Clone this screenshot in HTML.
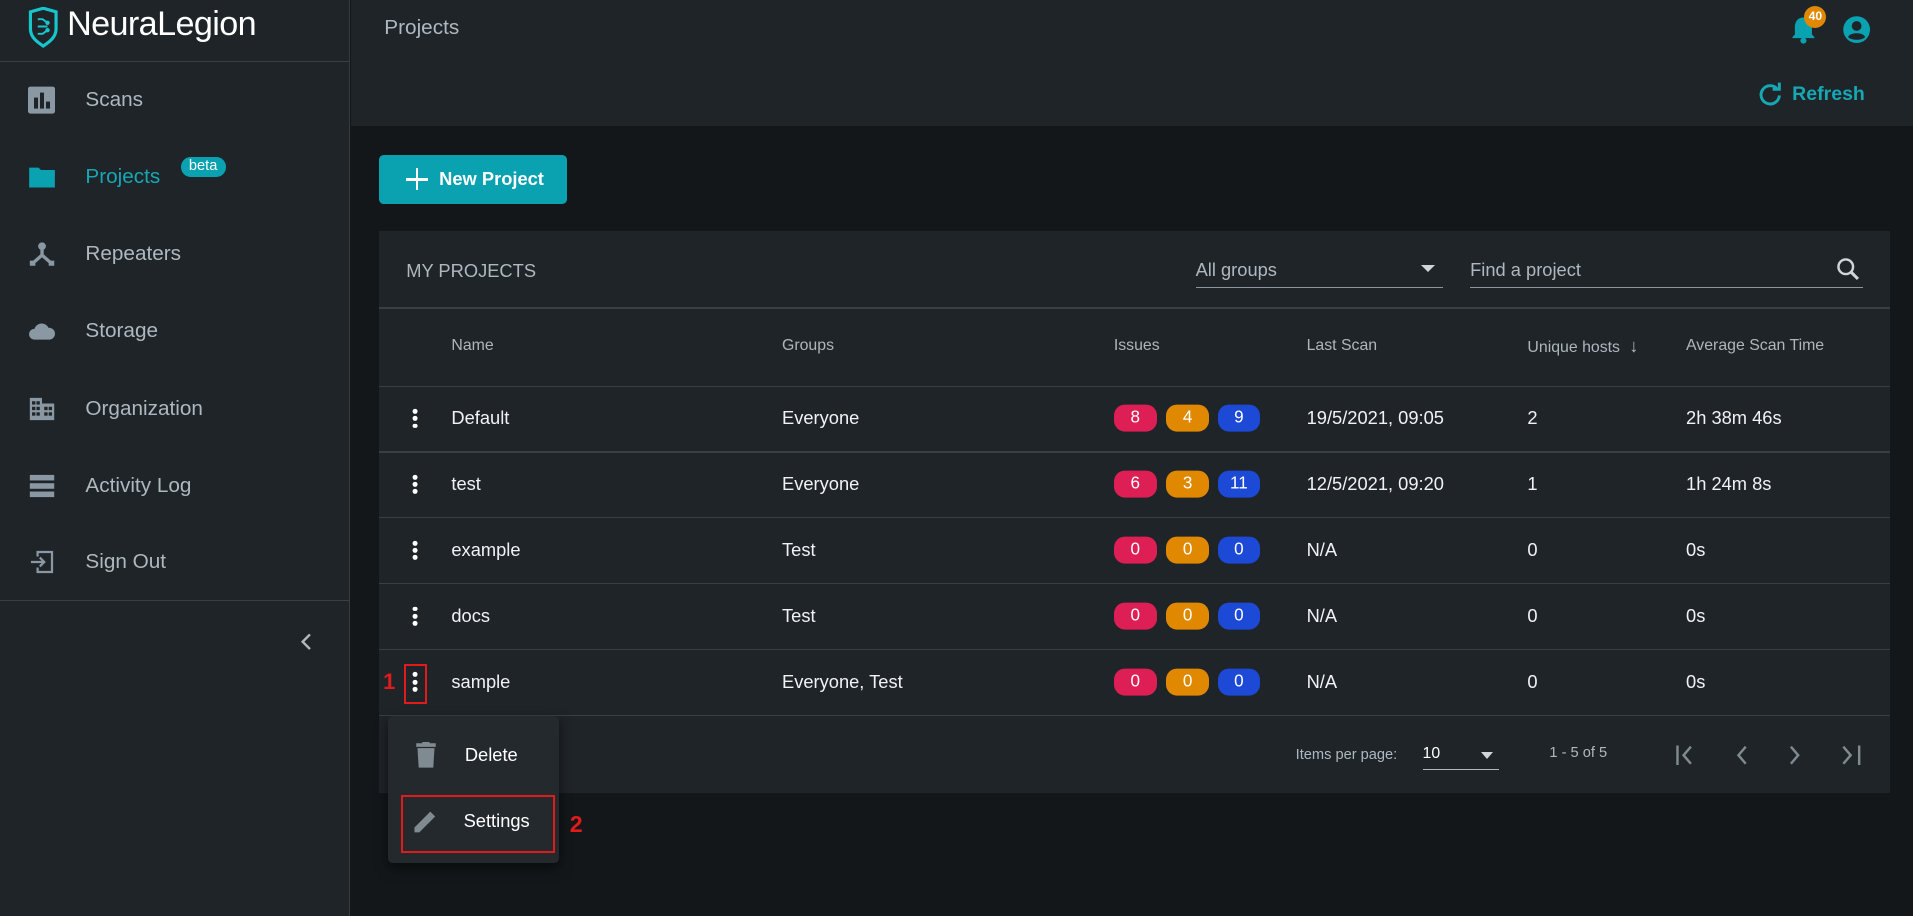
<!DOCTYPE html>
<html><head><meta charset="utf-8"><style>
*{box-sizing:border-box;margin:0;padding:0}
html,body{width:1913px;height:916px;overflow:hidden;background:#131719}
#w{zoom:1.22;width:1568px;height:751px;position:relative;font-family:"Liberation Sans",sans-serif;color:#e8ecee;background:#131719}
.a{position:absolute;white-space:nowrap}
.side{left:0;top:0;width:287px;height:751px;background:#1f2428;border-right:1px solid #363b40}
.hdr{left:288px;top:0;width:1280px;height:103px;background:#1f2428}
.mi{position:absolute;left:70px;font-size:17px;color:#aeb8bf;transform:translateY(-50%)}
.ic{position:absolute;left:23px;width:23px;height:20px;transform:translateY(-50%)}
.card{left:311px;top:189px;width:1238px;height:461px;background:#1f2428}
.th{font-size:13px;color:#aeb6bc;transform:translateY(-50%)}
.td{font-size:15px;color:#f0f3f4;transform:translateY(-50%)}
.ln{left:0;width:1238px;height:1px;background:#3a3f44}
.pill{position:absolute;width:35px;height:22px;border-radius:9px;font-size:14px;color:#fff;text-align:center;line-height:22px;transform:translateY(-50%)}
.r{background:#de1f55}.o{background:#df8800}.b{background:#1c49d6}
.dots{position:absolute;width:4px;transform:translate(-50%,-50%)}
.dots i{display:block;width:4px;height:4px;border-radius:50%;background:#fff;margin:2px 0}
</style></head><body><div id="w">
<div class="a side">
 <svg class="a" style="left:23px;top:6px" width="25" height="33" viewBox="0 0 25 33"><path d="M2 4 L12.5 1 L23 4 V18 C23 25 17 29 12.5 32 C8 29 2 25 2 18 Z" fill="none" stroke="#16c6cc" stroke-width="2.6"/><path d="M8 10 H12 L16 13 M8 16 H16 M8 22 H12 L16 19" fill="none" stroke="#16c6cc" stroke-width="1.6"/><circle cx="16" cy="13" r="1.8" fill="#16c6cc"/><circle cx="16" cy="19" r="1.8" fill="#16c6cc"/></svg>
 <div class="a" style="left:55px;top:4px;font-size:28px;color:#fff;letter-spacing:-0.5px">NeuraLegion</div>
 <div class="a" style="left:0;top:50px;width:287px;height:1px;background:#3a3f44"></div>
 <div class="ic" style="top:82px;background:#8a98a3;border-radius:2px;width:22px;height:22px"><div class="a" style="left:5px;top:9px;width:3px;height:9px;background:#1f2428"></div><div class="a" style="left:10px;top:5px;width:3px;height:13px;background:#1f2428"></div><div class="a" style="left:15px;top:12px;width:3px;height:6px;background:#1f2428"></div></div>
 <div class="mi" style="top:82px">Scans</div>
 <svg class="ic" style="top:145px" viewBox="0 0 24 20"><path d="M1 2 H9 L11 4 H23 V19 H1 Z" fill="#0aa1b0"/></svg>
 <div class="mi" style="top:145px;color:#17a7b4">Projects</div>
 <div class="a" style="left:148px;top:129px;width:37px;height:16px;border-radius:8px;background:#0aa1b0;font-size:12px;color:#fff;text-align:center;line-height:16px">beta</div>
 <svg class="ic" style="top:208px" viewBox="0 0 24 22"><circle cx="12" cy="4" r="3.5" fill="#8a98a3"/><path d="M12 7 V12 L4 19 M12 12 L20 19" stroke="#8a98a3" stroke-width="3" fill="none"/><rect x="1" y="17" width="5" height="5" fill="#8a98a3"/><rect x="18" y="17" width="5" height="5" fill="#8a98a3"/></svg>
 <div class="mi" style="top:208px">Repeaters</div>
 <svg class="ic" style="top:271px" viewBox="0 0 26 18"><path d="M6 17 A5 5 0 0 1 6 7 A7 7 0 0 1 19 6 A5.5 5.5 0 0 1 20 17 Z" fill="#8a98a3"/></svg>
 <div class="mi" style="top:271px">Storage</div>
 <svg class="ic" style="top:335px" viewBox="0 0 24 22"><path d="M1 1 H12 V6 H23 V21 H1 Z" fill="#8a98a3"/><g fill="#1f2428"><rect x="3" y="4" width="3" height="3"/><rect x="7" y="4" width="3" height="3"/><rect x="3" y="9" width="3" height="3"/><rect x="7" y="9" width="3" height="3"/><rect x="3" y="14" width="3" height="3"/><rect x="7" y="14" width="3" height="3"/><rect x="14" y="9" width="3" height="3"/><rect x="18" y="9" width="3" height="3"/><rect x="14" y="14" width="3" height="3"/><rect x="18" y="14" width="3" height="3"/></g></svg>
 <div class="mi" style="top:335px">Organization</div>
 <svg class="ic" style="top:398px" viewBox="0 0 24 22"><rect x="1" y="1" width="22" height="5" fill="#8a98a3"/><rect x="1" y="8.5" width="22" height="5" fill="#8a98a3"/><rect x="1" y="16" width="22" height="5" fill="#8a98a3"/></svg>
 <div class="mi" style="top:398px">Activity Log</div>
 <svg class="ic" style="top:461px" viewBox="0 0 24 22"><path d="M8 6 V2 H21 V20 H8 V16" stroke="#8a98a3" stroke-width="2" fill="none"/><path d="M2 11 H14 M10 7 L14 11 L10 15" stroke="#8a98a3" stroke-width="2" fill="none"/></svg>
 <div class="mi" style="top:461px">Sign Out</div>
 <div class="a" style="left:0;top:492px;width:287px;height:1px;background:#3a3f44"></div>
 <svg class="a" style="left:245px;top:518px" width="12" height="16" viewBox="0 0 12 16"><path d="M9 2 L3 8 L9 14" stroke="#aeb8bf" stroke-width="2" fill="none"/></svg>
</div>
<div class="a hdr">
 <div class="a" style="left:27px;top:13px;font-size:17px;color:#aeb8bf">Projects</div>
 <svg class="a" style="left:1179px;top:12px" width="22" height="24" viewBox="0 0 22 24"><path d="M11 2 C6 2 4 6 4 10 V16 L2 18 V19 H20 V18 L18 16 V10 C18 6 16 2 11 2 Z" fill="#0aa1b0"/><circle cx="11" cy="21" r="2.5" fill="#0aa1b0"/></svg>
 <div class="a" style="left:1191px;top:5px;width:18px;height:18px;border-radius:50%;background:#df8800;font-size:10px;font-weight:bold;color:#fff;text-align:center;line-height:18px">40</div>
 <svg class="a" style="left:1222px;top:12px" width="24" height="24" viewBox="0 0 24 24"><circle cx="12" cy="12" r="11" fill="#0aa1b0"/><circle cx="12" cy="9" r="4" fill="#1f2428"/><path d="M5 18 C7 14 17 14 19 18 C17 21 7 21 5 18 Z" fill="#1f2428"/></svg>
 <svg class="a" style="left:1153px;top:67px" width="20" height="20" viewBox="0 0 20 20"><path d="M16 6 A7.5 7.5 0 1 0 17.5 11" stroke="#17a7b4" stroke-width="2.4" fill="none"/><path d="M12 6 H17.5 V0.5" stroke="#17a7b4" stroke-width="2.4" fill="none"/></svg>
 <div class="a" style="left:1181px;top:68px;font-size:16px;font-weight:bold;color:#17a7b4">Refresh</div>
</div>
<div class="a" style="left:311px;top:127px;width:154px;height:40px;background:#0aa1b0;border-radius:4px">
 <div class="a" style="left:22px;top:19px;width:18px;height:2px;background:#fff"></div><div class="a" style="left:30px;top:11px;width:2px;height:18px;background:#fff"></div>
 <div class="a" style="left:49px;top:11px;font-size:15px;font-weight:bold;color:#fff">New Project</div>
</div>
<div class="a card">
 <div class="a" style="left:22px;top:24px;font-size:15px;color:#aeb8bf">MY PROJECTS</div>
 <div class="a" style="left:669px;top:23px;font-size:15px;color:#aeb8bf">All groups</div>
 <div class="a" style="left:854px;top:28px;border:6px solid transparent;border-top:6px solid #cfd5d9"></div>
 <div class="a" style="left:669px;top:46px;width:203px;height:1px;background:#8a959c"></div>
 <div class="a" style="left:894px;top:23px;font-size:15px;color:#aeb8bf">Find a project</div>
 <svg class="a" style="left:1194px;top:22px" width="20" height="20" viewBox="0 0 20 20"><circle cx="8" cy="8" r="6" stroke="#cfd5d9" stroke-width="2" fill="none"/><path d="M12.5 12.5 L18 18" stroke="#cfd5d9" stroke-width="2.5"/></svg>
 <div class="a" style="left:894px;top:46px;width:322px;height:1px;background:#8a959c"></div>
 <div class="a ln" style="top:63px"></div>
 <div class="a th" style="left:59px;top:95px">Name</div>
 <div class="a th" style="left:330px;top:95px">Groups</div>
 <div class="a th" style="left:602px;top:95px">Issues</div>
 <div class="a th" style="left:760px;top:95px">Last Scan</div>
 <div class="a th" style="left:941px;top:95px">Unique hosts <span style="font-size:15px;margin-left:4px">&#8595;</span></div>
 <div class="a th" style="left:1071px;top:95px">Average Scan Time</div>
 <div class="a ln" style="top:127px"></div>
 <!-- rows -->
 <div class="dots" style="left:29px;top:154px"><i></i><i></i><i></i></div>
 <div class="a td" style="left:59px;top:154px">Default</div><div class="a td" style="left:330px;top:154px">Everyone</div>
 <div class="pill r" style="left:602px;top:154px">8</div><div class="pill o" style="left:645px;top:154px">4</div><div class="pill b" style="left:687px;top:154px">9</div>
 <div class="a td" style="left:760px;top:154px">19/5/2021, 09:05</div><div class="a td" style="left:941px;top:154px">2</div><div class="a td" style="left:1071px;top:154px">2h 38m 46s</div>
 <div class="a ln" style="top:181px"></div>
 <div class="dots" style="left:29px;top:208px"><i></i><i></i><i></i></div>
 <div class="a td" style="left:59px;top:208px">test</div><div class="a td" style="left:330px;top:208px">Everyone</div>
 <div class="pill r" style="left:602px;top:208px">6</div><div class="pill o" style="left:645px;top:208px">3</div><div class="pill b" style="left:687px;top:208px">11</div>
 <div class="a td" style="left:760px;top:208px">12/5/2021, 09:20</div><div class="a td" style="left:941px;top:208px">1</div><div class="a td" style="left:1071px;top:208px">1h 24m 8s</div>
 <div class="a ln" style="top:235px"></div>
 <div class="dots" style="left:29px;top:262px"><i></i><i></i><i></i></div>
 <div class="a td" style="left:59px;top:262px">example</div><div class="a td" style="left:330px;top:262px">Test</div>
 <div class="pill r" style="left:602px;top:262px">0</div><div class="pill o" style="left:645px;top:262px">0</div><div class="pill b" style="left:687px;top:262px">0</div>
 <div class="a td" style="left:760px;top:262px">N/A</div><div class="a td" style="left:941px;top:262px">0</div><div class="a td" style="left:1071px;top:262px">0s</div>
 <div class="a ln" style="top:289px"></div>
 <div class="dots" style="left:29px;top:316px"><i></i><i></i><i></i></div>
 <div class="a td" style="left:59px;top:316px">docs</div><div class="a td" style="left:330px;top:316px">Test</div>
 <div class="pill r" style="left:602px;top:316px">0</div><div class="pill o" style="left:645px;top:316px">0</div><div class="pill b" style="left:687px;top:316px">0</div>
 <div class="a td" style="left:760px;top:316px">N/A</div><div class="a td" style="left:941px;top:316px">0</div><div class="a td" style="left:1071px;top:316px">0s</div>
 <div class="a ln" style="top:343px"></div>
 <div class="dots" style="left:29px;top:370px"><i></i><i></i><i></i></div>
 <div class="a" style="left:20px;top:355px;width:19px;height:33px;border:2px solid #e01b1b"></div>
 <div class="a" style="left:3px;top:359px;font-size:18px;font-weight:bold;color:#e01b1b">1</div>
 <div class="a td" style="left:59px;top:370px">sample</div><div class="a td" style="left:330px;top:370px">Everyone, Test</div>
 <div class="pill r" style="left:602px;top:370px">0</div><div class="pill o" style="left:645px;top:370px">0</div><div class="pill b" style="left:687px;top:370px">0</div>
 <div class="a td" style="left:760px;top:370px">N/A</div><div class="a td" style="left:941px;top:370px">0</div><div class="a td" style="left:1071px;top:370px">0s</div>
 <div class="a ln" style="top:397px"></div>
 <div class="a" style="left:751px;top:423px;font-size:12px;color:#aeb8bf">Items per page:</div>
 <div class="a" style="left:855px;top:422px;font-size:13px;color:#fff">10</div>
 <div class="a" style="left:903px;top:427px;border:5px solid transparent;border-top:6px solid #cfd5d9"></div>
 <div class="a" style="left:855px;top:441px;width:63px;height:1px;background:#aeb8bf"></div>
 <div class="a" style="left:959px;top:422px;font-size:12px;color:#aeb8bf">1 - 5 of 5</div>
 <svg class="a" style="left:1062px;top:420px" width="170" height="20" viewBox="0 0 170 20"><g stroke="#7f8a91" stroke-width="2" fill="none"><path d="M2 2 V18 M13 3 L7 10 L13 17"/><path d="M58 3 L52 10 L58 17"/><path d="M95 3 L101 10 L95 17"/><path d="M138 3 L144 10 L138 17 M151 2 V18"/></g></svg>
</div>
<div class="a" style="left:318px;top:587px;width:140px;height:120px;background:#24292d;border-radius:4px;box-shadow:0 4px 10px rgba(0,0,0,.5)">
 <svg class="a" style="left:22px;top:21px" width="18" height="22" viewBox="0 0 18 22"><rect x="1" y="1" width="16" height="3" fill="#7f8a91"/><rect x="6" y="0" width="6" height="2" fill="#7f8a91"/><path d="M2 5 H16 L15 21 H3 Z" fill="#7f8a91"/></svg>
 <div class="a" style="left:63px;top:23px;font-size:15px;color:#fff">Delete</div>
 <svg class="a" style="left:20px;top:75px" width="22" height="22" viewBox="0 0 22 22"><path d="M2 16 L15 3 L19 7 L6 20 H2 Z" fill="#7f8a91"/></svg>
 <div class="a" style="left:62px;top:77px;font-size:15px;color:#fff">Settings</div>
 <div class="a" style="left:11px;top:65px;width:126px;height:47px;border:2px solid #e01b1b"></div>
</div>
<div class="a" style="left:467px;top:665px;font-size:19px;font-weight:bold;color:#e01b1b">2</div>
</div></body></html>
